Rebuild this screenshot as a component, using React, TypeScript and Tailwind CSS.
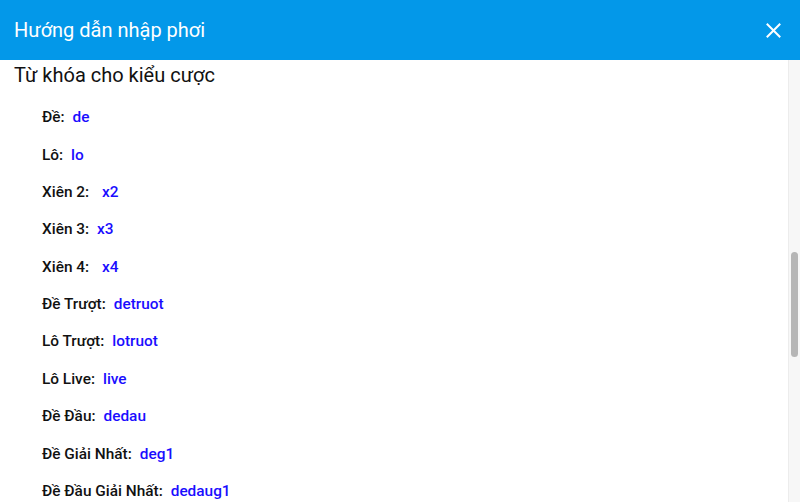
const keywords: { label: string; value: string; gap?: string }[] = [
  { label: "Đề:", value: "de" },
  { label: "Lô:", value: "lo" },
  { label: "Xiên 2:", value: "x2", gap: "ml-[13px]" },
  { label: "Xiên 3:", value: "x3" },
  { label: "Xiên 4:", value: "x4", gap: "ml-[13px]" },
  { label: "Đề Trượt:", value: "detruot" },
  { label: "Lô Trượt:", value: "lotruot" },
  { label: "Lô Live:", value: "live" },
  { label: "Đề Đầu:", value: "dedau" },
  { label: "Đề Giải Nhất:", value: "deg1" },
  { label: "Đề Đầu Giải Nhất:", value: "dedaug1" },
];

export default function App() {
  return (
    <div className="w-[800px] h-[502px] flex flex-col bg-white overflow-hidden font-['Roboto','Liberation_Sans',sans-serif]">
      <header className="h-[60px] shrink-0 bg-[#0398e9] flex items-center justify-between pl-[14px] pr-[19px]">
        <h1 className="text-white text-[20px] font-normal">Hướng dẫn nhập phơi</h1>
        <button className="w-[16px] h-[16px] flex items-center justify-center">
          <svg width="15" height="15" viewBox="0 0 15 15" fill="none">
            <path d="M1.5 1.5 L13.5 13.5 M13.5 1.5 L1.5 13.5" stroke="white" strokeWidth="2" strokeLinecap="square" />
          </svg>
        </button>
      </header>

      <div className="flex-1 flex min-h-0">
        <div className="flex-1 overflow-hidden px-[14px]">
          <h2 className="text-[20px] text-[#111] leading-[28px] pt-[1px] mb-[10px]">Từ khóa cho kiểu cược</h2>
          <div className="flex flex-col pl-[28px]">
            {keywords.map((k) => (
              <div key={k.value} className="h-[37.4px] flex items-center text-[15.4px] font-medium">
                <span className="text-[#111]">{k.label}</span>
                <span className={`${k.gap ?? "ml-2"} text-[#1a0dff]`}>{k.value}</span>
              </div>
            ))}
          </div>
        </div>

        <div className="w-[12px] shrink-0 bg-[#f7f7f7] border-l border-[#ececec] pt-[192px] flex justify-center">
          <div className="w-[7px] h-[105px] rounded-full bg-[#b6b6b6]" />
        </div>
      </div>
    </div>
  );
}
